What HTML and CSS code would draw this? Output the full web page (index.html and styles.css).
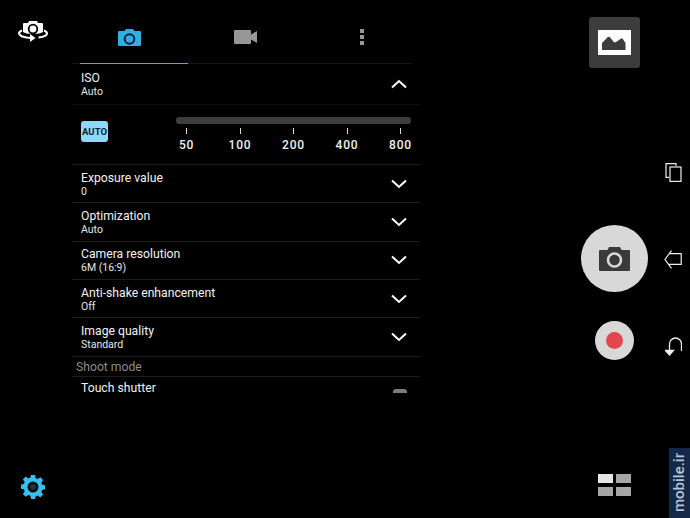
FILE: index.html
```html
<!DOCTYPE html>
<html>
<head>
  <title>Camera settings</title>
  <link rel="stylesheet" href="styles.css">
</head>
<body>
  <div class="screen">
    <div class="left-rail">
      <svg class="switch-icon" viewBox="0 0 30 21">
        <path fill="#fff" d="M6 2h4l1-2h8l1 2h4a1 1 0 0 1 1 1v8c-1.500 1.200-5 2-10 2s-8.500-.8-10-2V3a1 1 0 0 1 1-1z"/>
        <circle cx="15" cy="8" r="4.300" fill="none" stroke="#000" stroke-width="1.800"/>
        <path fill="none" stroke="#fff" stroke-width="2" d="M4 9.500C2 10.300 1 11.200 1 12.300c0 2.400 5 4.300 11.500 4.600M26 9.500c2 .8 3 1.700 3 2.800 0 2-3.400 3.700-8.500 4.300"/>
        <path fill="#fff" d="M12 13l5.500 4-5.500 4z"/>
      </svg>
      <svg class="gear-icon" viewBox="0 0 24 24">
        <path fill="#35c0f0" d="M10 0h4l.6 3.200 2 .8L19.300 2.200l2.800 2.800-1.800 2.700.8 2 3.200.6v4l-3.200.6-.8 2 1.800 2.700-2.800 2.800-2.700-1.800-2 .8L14 24h-4l-.6-3.200-2-.8-2.700 1.800L1.900 19l1.800-2.700-.8-2L0 13.700v-4l2.900-.6.800-2-1.800-2.700L4.700 1.600l2.700 1.800 2-.8z"/>
        <circle cx="12" cy="12" r="5.500" fill="#0d0d0d"/>
        <circle cx="12" cy="12" r="2.800" fill="#35c0f0" fill-opacity=".25"/>
      </svg>
    </div>

    <div class="panel">
      <div class="tabs">
        <div class="tab active">
          <svg width="23" height="17" viewBox="0 0 23 17">
            <path fill="#33ade6" d="M1 2h5.500l1.500-2h7l1.500 2H22a1 1 0 0 1 1 1v13a1 1 0 0 1-1 1H1a1 1 0 0 1-1-1V3a1 1 0 0 1 1-1z"/>
            <circle cx="11.500" cy="10" r="4.800" fill="none" stroke="#04222f" stroke-width="2"/>
          </svg>
        </div>
        <div class="tab">
          <svg class="video-icon" width="23" height="14" viewBox="0 0 23 14">
            <path fill="#969696" d="M1 0h15a1 1 0 0 1 1 1v3.500L23 1v12l-6-3.500V13a1 1 0 0 1-1 1H1a1 1 0 0 1-1-1V1a1 1 0 0 1 1-1z"/>
          </svg>
        </div>
        <div class="tab">
          <div class="dots"><i></i><i></i><i></i></div>
        </div>
      </div>

      <div class="row row-iso">
        <div class="row-text">
          <div class="row-title">ISO</div>
          <div class="row-value">Auto</div>
        </div>
        <svg class="chevron" viewBox="0 0 16 10"><path d="M1 8.500L8 2l7 6.500"/></svg>
      </div>

      <div class="iso-box">
        <div class="auto-btn">AUTO</div>
        <div class="slider">
          <div class="slider-bar"></div>
          <div class="scale">
            <div class="stop"><i></i><span>50</span></div>
            <div class="stop"><i></i><span>100</span></div>
            <div class="stop"><i></i><span>200</span></div>
            <div class="stop"><i></i><span>400</span></div>
            <div class="stop"><i></i><span>800</span></div>
          </div>
        </div>
      </div>

      <div class="row">
        <div class="row-text">
          <div class="row-title">Exposure value</div>
          <div class="row-value">0</div>
        </div>
        <svg class="chevron" viewBox="0 0 16 10"><path d="M1 1.500L8 8l7-6.500"/></svg>
      </div>
      <div class="row">
        <div class="row-text">
          <div class="row-title">Optimization</div>
          <div class="row-value">Auto</div>
        </div>
        <svg class="chevron" viewBox="0 0 16 10"><path d="M1 1.500L8 8l7-6.500"/></svg>
      </div>
      <div class="row">
        <div class="row-text">
          <div class="row-title">Camera resolution</div>
          <div class="row-value">6M (16:9)</div>
        </div>
        <svg class="chevron" viewBox="0 0 16 10"><path d="M1 1.500L8 8l7-6.500"/></svg>
      </div>
      <div class="row">
        <div class="row-text">
          <div class="row-title">Anti-shake enhancement</div>
          <div class="row-value">Off</div>
        </div>
        <svg class="chevron" viewBox="0 0 16 10"><path d="M1 1.500L8 8l7-6.500"/></svg>
      </div>
      <div class="row">
        <div class="row-text">
          <div class="row-title">Image quality</div>
          <div class="row-value">Standard</div>
        </div>
        <svg class="chevron" viewBox="0 0 16 10"><path d="M1 1.500L8 8l7-6.500"/></svg>
      </div>

      <div class="section">Shoot mode</div>

      <div class="row row-last">
        <div class="row-title">Touch shutter</div>
        <div class="toggle"></div>
      </div>
    </div>

    <div class="controls">
      <div class="gallery">
        <svg width="33" height="25" viewBox="0 0 33 25">
          <rect width="33" height="25" fill="#fff"/>
          <path fill="#3c3c3c" d="M4 20v-7l3-3 3-3.300 2 .5 3.500 4.500 1.500.8 3-1.800 3-2.200 1.500 0 3 4.500V20z"/>
        </svg>
      </div>
      <div class="shutter">
        <svg width="31" height="24" viewBox="0 0 31 24">
          <path fill="#3a3a3a" d="M1 3h7.500L10 0h11l1.500 3H30a1 1 0 0 1 1 1v19a1 1 0 0 1-1 1H1a1 1 0 0 1-1-1V4a1 1 0 0 1 1-1z"/>
          <circle cx="15.500" cy="13" r="6.500" fill="none" stroke="#d8d8d8" stroke-width="2.600"/>
        </svg>
      </div>
      <div class="record"><i></i></div>
      <div class="grid-icon"><i class="lit"></i><i></i><i></i><i></i></div>
    </div>

    <div class="nav">
      <svg width="17" height="19" viewBox="0 0 17 19" fill="none" stroke="#eee" stroke-width="1.200">
        <path d="M11 3V.6H1v13.800h3"/>
        <rect x="5" y="4" width="11" height="14.400" fill="#000"/>
      </svg>
      <svg width="18" height="19" viewBox="0 0 18 19" fill="none" stroke="#eee" stroke-width="1.200">
        <path d="M7.500 .6L1 9.500l6.500 8.900M5 3.700h12.200v10.600H5"/>
      </svg>
      <svg width="17" height="19" viewBox="0 0 17 19" fill="none" stroke="#eee" stroke-width="1.300">
        <path d="M4.500 13V7a6 6 0 0 1 12 0v7"/>
        <path d="M0.500 13.500h8L4.500 18z" fill="#eee"/>
      </svg>
    </div>
  </div>

  <div class="watermark">mobile.ir</div>
</body>
</html>
```

FILE: styles.css
```css
body {
  margin: 0;
  background: #000;
  color: #fff;
  font-family: Roboto, "Liberation Sans", sans-serif;
}

.screen {
  display: flex;
  height: 518px;
  overflow: hidden;
}

/* left side */
.left-rail {
  width: 72px;
  flex-shrink: 0;
  display: flex;
  flex-direction: column;
  justify-content: space-between;
  align-items: flex-start;
  padding: 21px 0 19px 18px;
  box-sizing: border-box;
}

.switch-icon {
  width: 30px;
  height: 21px;
}

.gear-icon {
  width: 24px;
  height: 24px;
  margin-left: 3px;
}

/* settings panel */
.panel {
  width: 348px;
  flex-shrink: 0;
}

.tabs {
  display: flex;
  height: 64px;
  margin-right: 9px;
  border-bottom: 1px solid #161616;
  box-sizing: border-box;
}

.tab {
  width: 116px;
  height: 64px;
  flex-shrink: 0;
  padding-top: 29px;
  box-sizing: border-box;
  display: flex;
  justify-content: center;
  align-items: flex-start;
}

.tab svg {
  margin-right: 2px;
}

.tab.active {
  position: relative;
}

.tab.active::after {
  content: "";
  position: absolute;
  left: 8px;
  right: 0;
  bottom: 0;
  height: 1px;
  background: #3fb4ea;
}

.video-icon {
  margin-top: 1px;
}

.dots {
  display: flex;
  flex-direction: column;
  gap: 2px;
}

.dots i {
  display: block;
  width: 4px;
  height: 4px;
  background: #969696;
}

.row {
  height: 38.33px;
  box-sizing: border-box;
  padding: 0 13px 0 9px;
  display: flex;
  justify-content: space-between;
  align-items: center;
  border-bottom: 1px solid #1d1d1d;
}

.row-iso {
  height: 41px;
  border-bottom-color: #101010;
}

.row-text {
  padding-top: 1px;
}

.row-title {
  font-size: 12.2px;
  line-height: 15px;
  color: #f2f2f2;
}

.row-value {
  font-size: 10.5px;
  line-height: 12px;
  color: #e6e6e6;
}

.chevron {
  width: 16px;
  height: 10px;
  fill: none;
  stroke: #fff;
  stroke-width: 2;
}

.iso-box {
  height: 60px;
  box-sizing: border-box;
  padding: 12px 9px 0;
  display: flex;
  gap: 68px;
  border-bottom: 1px solid #1d1d1d;
}

.auto-btn {
  width: 27px;
  height: 21px;
  margin-top: 4px;
  border-radius: 3px;
  background: #8fd8fb;
  color: #0b2230;
  font-size: 9.5px;
  font-weight: 700;
  line-height: 21px;
  text-align: center;
}

.slider {
  width: 235px;
}

.slider-bar {
  height: 7px;
  border-radius: 3px;
  background: #3c3e3d;
}

.scale {
  display: flex;
  justify-content: space-between;
  margin-top: 4px;
}

.stop {
  width: 21px;
  display: flex;
  flex-direction: column;
  align-items: center;
}

.stop i {
  display: block;
  width: 1px;
  height: 6px;
  background: #ddd;
}

.stop span {
  margin-top: 4px;
  font-size: 12px;
  font-weight: 500;
  line-height: 14px;
  letter-spacing: .8px;
  color: #f0f0f0;
}

.section {
  height: 20px;
  padding-left: 4px;
  box-sizing: border-box;
  border-bottom: 1px solid #1d1d1d;
  font-size: 12.2px;
  line-height: 20px;
  color: #8c8c8c;
}

.row-last {
  border-bottom: 0;
  align-items: flex-start;
  padding-top: 4px;
}

.toggle {
  width: 14px;
  height: 4px;
  margin-top: 8px;
  border-radius: 3px 3px 0 0;
  background: #7d7d7d;
}

/* capture controls */
.controls {
  width: 100px;
  margin-left: 144.5px;
  flex-shrink: 0;
  display: flex;
  flex-direction: column;
  align-items: center;
  padding-top: 17px;
  box-sizing: border-box;
}

.gallery {
  width: 51px;
  height: 51px;
  border-radius: 3px;
  background: #3c3c3c;
  display: flex;
  justify-content: center;
  align-items: center;
}

.shutter {
  width: 67px;
  height: 67px;
  margin-top: 157px;
  border-radius: 50%;
  background: #d8d8d8;
  display: flex;
  justify-content: center;
  align-items: center;
}

.record {
  width: 39px;
  height: 39px;
  margin-top: 29px;
  border-radius: 50%;
  background: #d8d8d8;
  display: flex;
  justify-content: center;
  align-items: center;
}

.record i {
  display: block;
  width: 17px;
  height: 17px;
  border-radius: 50%;
  background: #e0474f;
}

.grid-icon {
  display: grid;
  grid-template-columns: 15px 15px;
  gap: 4px 3px;
  margin-top: 114px;
}

.grid-icon i {
  display: block;
  height: 9px;
  background: #a6a6a6;
}

.grid-icon i.lit {
  background: #e6e6e6;
}

.nav {
  width: 17px;
  flex-shrink: 0;
  display: flex;
  flex-direction: column;
  align-items: center;
  gap: 68px;
  padding-top: 163px;
}

.watermark {
  position: absolute;
  right: 0;
  bottom: 0;
  width: 21px;
  height: 70px;
  background: #14284a;
  color: #b8c4d4;
  font-size: 15px;
  font-weight: 500;
  line-height: 21px;
  white-space: nowrap;
  writing-mode: vertical-rl;
  transform: rotate(180deg);
  text-align: center;
}
```
